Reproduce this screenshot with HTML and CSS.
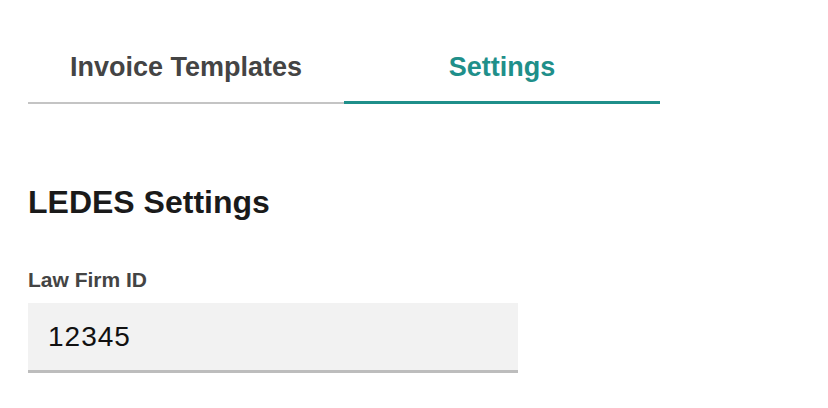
FILE: index.html
```html
<!DOCTYPE html>
<html lang="en">
<head>
    <meta charset="UTF-8">
    <meta name="viewport" content="width=device-width, initial-scale=1.0">
    <title>Settings</title>
    <link rel="stylesheet" href="styles.css">
</head>
<body>
    <div class="page">
        <div class="tabs">
            <div class="tab">Invoice Templates</div>
            <div class="tab active">Settings</div>
        </div>

        <h2 class="section-title">LEDES Settings</h2>

        <div class="field">
            <label for="firmId">Law Firm ID</label>
            <input id="firmId" type="text" value="12345">
        </div>
    </div>
</body>
</html>
```

FILE: styles.css
```css
body {
    font-family: 'Liberation Sans', Arial, sans-serif;
    margin: 0;
    background: #fff;
    color: #1a1a1a;
}

.page {
    padding: 40px 28px;
}

.tabs {
    display: flex;
    width: 632px;
    border-bottom: 2px solid #c4c4c4;
}

.tab {
    flex: 1;
    text-align: center;
    font-size: 27px;
    font-weight: bold;
    color: #444;
    padding: 12px 0 18px;
    margin-bottom: -2px;
    border-bottom: 3px solid transparent;
}

.tab.active {
    color: #1f8f8a;
    border-bottom-color: #1f8f8a;
}

.section-title {
    font-size: 32px;
    font-weight: bold;
    margin: 79px 0 0;
    line-height: 38px;
}

.field {
    margin-top: 47px;
    display: flex;
    flex-direction: column;
}

.field label {
    font-size: 21px;
    font-weight: bold;
    color: #444;
    margin-bottom: 11px;
}

.field input {
    width: 490px;
    box-sizing: border-box;
    height: 70px;
    padding: 0 20px;
    border: none;
    border-bottom: 3px solid #bdbdbd;
    background: #f2f2f2;
    font-family: 'Liberation Sans', Arial, sans-serif;
    font-size: 28px;
    letter-spacing: 1px;
    color: #111;
    outline: none;
}
```
